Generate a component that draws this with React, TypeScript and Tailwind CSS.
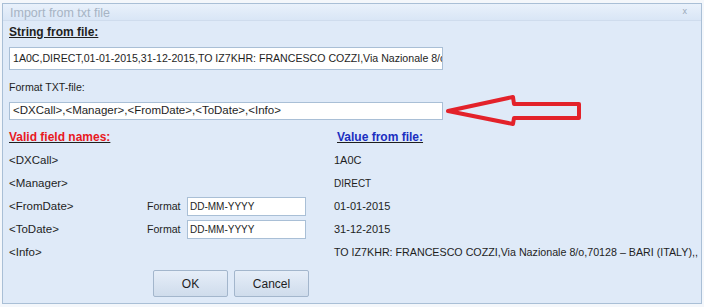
export default function App() {
  const rows = [
    { name: "<DXCall>", value: "1A0C", size: "text-[11px]" },
    { name: "<Manager>", value: "DIRECT", size: "text-[10px]" },
    { name: "<FromDate>", value: "01-01-2015", size: "text-[11px]", format: "DD-MM-YYYY" },
    { name: "<ToDate>", value: "31-12-2015", size: "text-[11px]", format: "DD-MM-YYYY" },
    { name: "<Info>", value: "TO IZ7KHR: FRANCESCO COZZI,Via Nazionale 8/o,70128 – BARI (ITALY),,", size: "text-[10.7px]" },
  ];

  return (
    <div className="w-[704px] h-[307px] bg-[#f4f7fb] pt-[3px] pl-[2px] font-['Liberation_Sans',sans-serif] text-[11px] text-[#1e1e1e]">
      <div className="relative w-[700px] h-[301px] border border-[#a9bfd6] bg-[#dfeaf8]">
        {/* Title bar */}
        <div className="h-[17px] flex items-center justify-between pl-[7px] pr-[14px] bg-gradient-to-b from-[#e9f1fb] to-[#d9e6f6] border-b border-[#cfdced]">
          <span className="text-[#a7b4c4] text-[12.5px] mt-[2px]">Import from txt file</span>
          <span className="text-[#9aa8b8] text-[9px]">x</span>
        </div>

        <div className="pl-[6px] pt-[3px]">
          <div className="font-bold underline text-[12px] h-[16px] leading-[16px]">String from file:</div>
          <div className="mt-[7px] w-[434px] h-[23px] border border-[#a9bfd6] bg-white pl-[3px] flex items-center overflow-hidden whitespace-nowrap text-[10.6px]">
            1A0C,DIRECT,01-01-2015,31-12-2015,TO IZ7KHR: FRANCESCO COZZI,Via Nazionale 8/o,70128 – BARI (ITALY),,
          </div>

          <div className="mt-[10px] h-[14px] leading-[14px] text-[10.6px]">Format TXT-file:</div>
          <div className="mt-[8px] w-[434px] h-[18px] border border-[#a9bfd6] bg-white pl-[3px] flex items-center text-[11.5px]">
            {"<DXCall>,<Manager>,<FromDate>,<ToDate>,<Info>"}
          </div>

          <div className="mt-[9px] flex h-[16px] leading-[16px] font-bold underline text-[12px]">
            <span className="w-[328px] shrink-0 text-[#e8191f]">Valid field names:</span>
            <span className="text-[#1a2fc0]">Value from file:</span>
          </div>

          <div className="mt-[6px] flex flex-col gap-[4px]">
            {rows.map((r) => (
              <div key={r.name} className="flex items-center h-[19px]">
                <span className="w-[138px] shrink-0 text-[11.5px]">{r.name}</span>
                <span className="w-[187px] shrink-0 flex items-center">
                  {r.format && (
                    <>
                      <span className="w-[40px] text-[10.6px]">Format</span>
                      <span className="w-[119px] h-[19px] border border-[#a9bfd6] bg-white pl-[2px] flex items-center text-[10px]">
                        {r.format}
                      </span>
                    </>
                  )}
                </span>
                <span className={`whitespace-nowrap ${r.size}`}>{r.value}</span>
              </div>
            ))}
          </div>

          <div className="mt-[8px] pl-[144px] flex gap-[6px]">
            <button className="w-[75px] h-[27px] rounded-[2px] border border-[#a3b6cc] bg-gradient-to-b from-[#e6eef8] to-[#cfdcec] text-[12px]">
              OK
            </button>
            <button className="w-[75px] h-[27px] rounded-[2px] border border-[#a3b6cc] bg-gradient-to-b from-[#e6eef8] to-[#cfdcec] text-[12px]">
              Cancel
            </button>
          </div>
        </div>

        {/* Red arrow annotation */}
        <svg className="absolute left-[440px] top-[87px]" width="145" height="40" viewBox="0 0 145 40">
          <path
            d="M5 20 L70 6 L71 13 L136 13 L136 27 L71 27 L70 33 Z"
            fill="none"
            stroke="#e3222a"
            strokeWidth="4"
            strokeLinejoin="round"
          />
        </svg>
      </div>
    </div>
  );
}
